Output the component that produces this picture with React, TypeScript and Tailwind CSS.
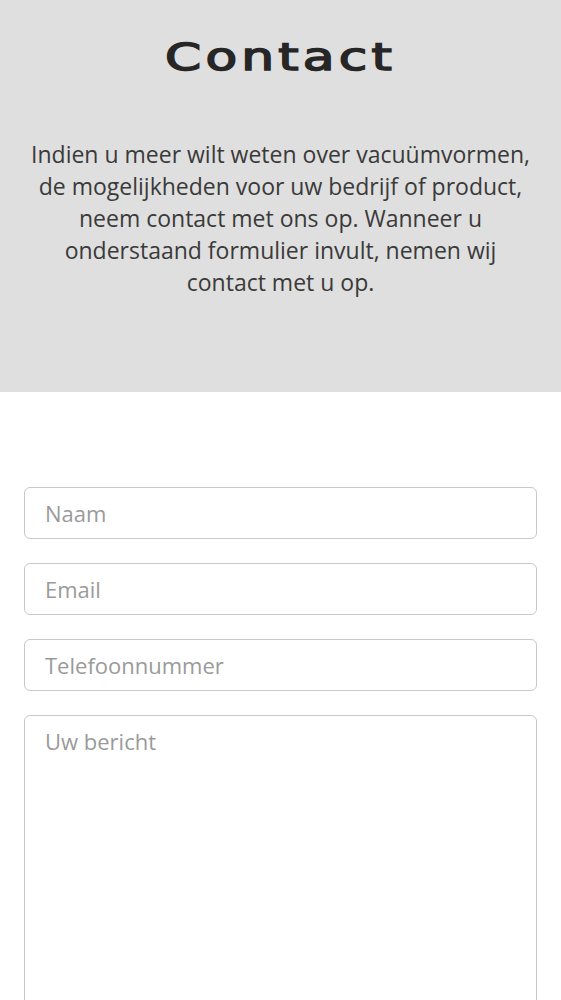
const fields = ['Naam', 'Email', 'Telefoonnummer'];

const App = () => {
  return (
    <div className="min-h-screen bg-white" style={{ fontFamily: '"Open Sans", sans-serif' }}>
      {/* Header */}
      <section className="h-[392px] bg-[#dfdfdf] px-6 pt-[30px] text-center">
        <h1 className="font-['DejaVu_Sans',sans-serif] text-[37px] font-normal leading-[56px] text-[#262626] [-webkit-text-stroke:1.5px_#262626]">
          <span className="inline-block scale-x-[1.4] tracking-[3px]">Contact</span>
        </h1>
        <p className="mt-[52px] text-[23px] leading-[32px] text-[#3a3a3a]">
          Indien u meer wilt weten over vacuümvormen, de mogelijkheden voor uw bedrijf of product, neem contact met ons op. Wanneer u onderstaand formulier invult, nemen wij contact met u op.
        </p>
      </section>

      {/* Form */}
      <form className="flex flex-col gap-6 px-6 pt-[95px]">
        {fields.map((f) => (
          <input
            key={f}
            type="text"
            placeholder={f}
            className="h-[52px] w-full rounded-[6px] border border-[#c8c8c8] px-5 text-[22px] text-[#333] placeholder:text-[#9a9a9a] outline-none"
          />
        ))}
        <textarea
          placeholder="Uw bericht"
          className="h-[320px] w-full resize-none rounded-[6px] border border-[#c8c8c8] px-5 pt-[10px] text-[22px] leading-[30px] text-[#333] placeholder:text-[#9a9a9a] outline-none"
        />
      </form>
    </div>
  );
};

export default App;
